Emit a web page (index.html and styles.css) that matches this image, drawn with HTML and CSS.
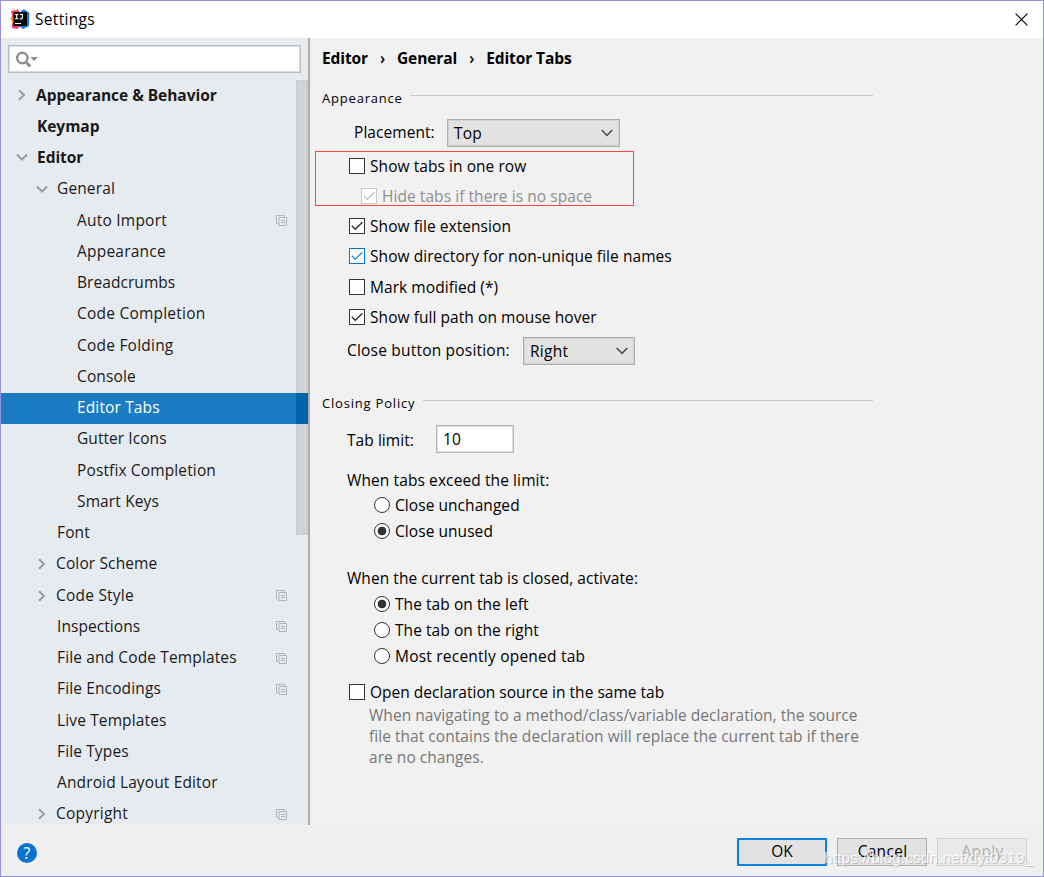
FILE: index.html
```html
<!DOCTYPE html>
<html lang="en">
<head>
<meta charset="utf-8">
<title>Settings</title>
<link rel="stylesheet" href="styles.css">
</head>
<body>
<svg class="defs" width="0" height="0" aria-hidden="true">
  <symbol id="right" viewBox="0 0 12 12"><path d="M3 1.2 8 6 3 10.8" fill="none" stroke="#999da1" stroke-width="2"/></symbol>
  <symbol id="down" viewBox="0 0 12 12"><path d="M1 3.5 6 8.5 11 3.5" fill="none" stroke="#999da1" stroke-width="2"/></symbol>
  <symbol id="copy" viewBox="0 0 11 11"><path d="M2 8.5H.5V.5h8V2M3 2.5h7.5v8H3zM5 5.5h4M5 7.5h4" fill="none" stroke="#adb6bc"/></symbol>
  <symbol id="tick" viewBox="0 0 16 16"><path d="M2 7.8 6 11.8 14.2 3.6" fill="none" stroke="currentColor" stroke-width="1.6"/></symbol>
  <symbol id="combo" viewBox="0 0 12 8"><path d="M.7 1 6 6.3 11.3 1" fill="none" stroke="#505050" stroke-width="1.6"/></symbol>
</svg>
<div class="window">
  <header class="titlebar">
    <svg class="logo" width="20" height="20" viewBox="0 0 20 20">
      <path d="M1 2 8 .5 10 4 6 12 .5 10 2 7z" fill="#f9455f"/>
      <path d="M.5 9 5 8 8 14 3 15z" fill="#fc8a2b"/>
      <path d="M2 14 8 13 11 17 7 20 2 19z" fill="#ef3f70"/>
      <path d="M11 2 14 .3 19.5 4 19 17 13 20 8 16z" fill="#147be8"/>
      <rect x="3.5" y="3" width="13.5" height="14" fill="#080808"/>
      <path d="M5 5.5h3.4M6.7 5.5v4.3M5 9.8h3.4M10 5.5h3M12.4 5.5v3.2q0 1.2-1.2 1.2H9.7M5 14.5h6" fill="none" stroke="#fff" stroke-width="1.1"/>
    </svg>
    <span class="title">Settings</span>
    <svg class="close" width="13" height="13" viewBox="0 0 13 13"><path d="M.6.6 12.4 12.4M12.4.6.6 12.4" stroke="#000" stroke-width="1.2"/></svg>
  </header>
  <div class="body">
    <aside class="sidebar">
      <div class="search">
        <svg width="24" height="18" viewBox="0 0 24 18"><circle cx="7.3" cy="7" r="5.2" fill="none" stroke="#8c8e90" stroke-width="2.4"/><path d="m11 11 4.2 4.5" stroke="#8c8e90" stroke-width="2.8"/><path d="M15 6h8l-4 4z" fill="#8c8e90"/></svg>
      </div>
      <nav class="tree">
        <div class="item top"><svg class="arrow"><use href="#right"/></svg><span class="l1">Appearance &amp; Behavior</span></div>
        <div class="item top"><span class="l1 km">Keymap</span></div>
        <div class="item top"><svg class="arrow"><use href="#down"/></svg><span class="l1 ed">Editor</span></div>
        <div class="item mid"><svg class="arrow"><use href="#down"/></svg><span>General</span></div>
        <div class="item leaf wider"><span>Auto Import</span><svg class="copy"><use href="#copy"/></svg></div>
        <div class="item leaf wider"><span>Appearance</span></div>
        <div class="item leaf tight"><span>Breadcrumbs</span></div>
        <div class="item leaf wider"><span>Code Completion</span></div>
        <div class="item leaf wider"><span>Code Folding</span></div>
        <div class="item leaf"><span>Console</span></div>
        <div class="item leaf selected"><span>Editor Tabs</span></div>
        <div class="item leaf tight"><span>Gutter Icons</span></div>
        <div class="item leaf"><span>Postfix Completion</span></div>
        <div class="item leaf"><span>Smart Keys</span></div>
        <div class="item mid"><span>Font</span></div>
        <div class="item mid closed"><svg class="arrow"><use href="#right"/></svg><span>Color Scheme</span></div>
        <div class="item mid closed wider"><svg class="arrow"><use href="#right"/></svg><span>Code Style</span><svg class="copy"><use href="#copy"/></svg></div>
        <div class="item mid tight"><span>Inspections</span><svg class="copy"><use href="#copy"/></svg></div>
        <div class="item mid"><span>File and Code Templates</span><svg class="copy"><use href="#copy"/></svg></div>
        <div class="item mid"><span>File Encodings</span><svg class="copy"><use href="#copy"/></svg></div>
        <div class="item mid"><span>Live Templates</span></div>
        <div class="item mid"><span>File Types</span></div>
        <div class="item mid"><span>Android Layout Editor</span></div>
        <div class="item mid closed wider"><svg class="arrow"><use href="#right"/></svg><span>Copyright</span><svg class="copy"><use href="#copy"/></svg></div>
      </nav>
      <div class="scrollbar"></div>
    </aside>
    <main class="content">
      <div class="crumbs"><span>Editor</span><i>›</i><span>General</span><i>›</i><span>Editor Tabs</span></div>
      <div class="section appearance"><span>Appearance</span><hr></div>
      <div class="row placement"><span>Placement:</span><div class="combo wide"><span>Top</span><svg><use href="#combo"/></svg></div></div>
      <div class="check first"><b></b><span>Show tabs in one row</span></div>
      <div class="check disabled"><b><svg><use href="#tick"/></svg></b><span>Hide tabs if there is no space</span></div>
      <div class="check"><b><svg><use href="#tick"/></svg></b><span>Show file extension</span></div>
      <div class="check hover"><b><svg><use href="#tick"/></svg></b><span>Show directory for non-unique file names</span></div>
      <div class="check mark"><b></b><span>Mark modified (*)</span></div>
      <div class="check"><b><svg><use href="#tick"/></svg></b><span>Show full path on mouse hover</span></div>
      <div class="row position"><span>Close button position:</span><div class="combo"><span>Right</span><svg><use href="#combo"/></svg></div></div>
      <div class="section closing"><span>Closing Policy</span><hr></div>
      <div class="row limit"><span>Tab limit:</span><div class="field">10</div></div>
      <div class="label exceed">When tabs exceed the limit:</div>
      <div class="radio"><b></b><span>Close unchanged</span></div>
      <div class="radio on"><b></b><span>Close unused</span></div>
      <div class="label activate">When the current tab is closed, activate:</div>
      <div class="radio on left"><b></b><span>The tab on the left</span></div>
      <div class="radio"><b></b><span>The tab on the right</span></div>
      <div class="radio recent"><b></b><span>Most recently opened tab</span></div>
      <div class="check open"><b></b><span>Open declaration source in the same tab</span></div>
      <p class="note">When navigating to a method/class/variable declaration, the source<br>file that contains the declaration will replace the current tab if there<br>are no changes.</p>
      <div class="marker"></div>
    </main>
  </div>
  <footer class="footer">
    <div class="help"><span>?</span></div>
    <div class="buttons"><div class="btn ok">OK</div><div class="btn">Cancel</div><div class="btn off">Apply</div></div>
    <div class="watermark">https://blog.csdn.net/dyt0319_</div>
  </footer>
</div>
</body>
</html>
```
FILE: styles.css
```css
* { box-sizing: border-box; }
body { margin: 0; font: 15.5px/20px "Open Sans", "Noto Sans", sans-serif; letter-spacing: .06px; color: #000; }
.defs { position: absolute; }
svg { display: block; flex: none; }
.window { width: 1044px; height: 877px; display: flex; flex-direction: column; border: 1px solid #9892dc; background: #f1f1f1; position: relative; overflow: hidden; }
.titlebar { height: 37px; flex: none; display: flex; align-items: center; background: #fff; padding: 0 15px 1px 9px; }
.title { margin-left: 5px; letter-spacing: .3px; }
.close { margin-left: auto; }
.body { display: flex; height: 787px; flex: none; }
.sidebar { width: 309px; flex: none; position: relative; overflow: hidden; background: #e6ebef; border-right: 2px solid #adadad; padding-top: 7px; }
.search { width: 293px; height: 28px; margin-left: 7px; background: #fff; border: 1px solid #b9bdc0; box-shadow: inset 0 0 0 1px #dadcde; padding: 5px 6px; }
.tree { padding-top: 7.5px; }
.item { height: 31.25px; padding-bottom: 3px; display: flex; align-items: center; position: relative; color: #1a1a1a; white-space: nowrap; letter-spacing: .13px; }
.item.wider { letter-spacing: .22px; }
.item.tight { letter-spacing: .06px; }
.item.top { padding-left: 15px; font-weight: 700; letter-spacing: -.04px; }
.top > span { margin-left: 8px; }
.top > .km { margin-left: 21px; }
.top > .ed { margin-left: 9px; }
.mid { padding-left: 56px; }
.mid .arrow { margin: 2px 9px 0 -21px; }
.mid.closed { padding-left: 55px; }
.mid.closed .arrow { margin: 2px 8px 0 -20px; }
.leaf { padding-left: 76px; }
.arrow { width: 12px; height: 12px; }
.copy { width: 11px; height: 11px; margin: 2px 21px 0 auto; }
.selected { background: #1a7dc4; color: #fff; }
.scrollbar { position: absolute; left: 295px; top: 42px; width: 12px; height: 455px; background: rgba(0, 0, 0, .1); border: 1px solid rgba(0, 0, 0, .03); }
.selected::after { content: ""; position: absolute; right: 0; top: 0; width: 12px; height: 100%; background: #0070be; }
.content { flex: 1; position: relative; padding: 8px 0 0 12px; white-space: nowrap; }
.crumbs { height: 24px; display: flex; align-items: center; font-weight: 700; letter-spacing: -.1px; }
.crumbs i { font-style: normal; margin: 0 11px 0 12px; width: 6px; font-weight: 600; }
.section { height: 24px; display: flex; align-items: center; font-size: 13px; letter-spacing: .8px; }
.section hr { flex: 1; border: 0; border-top: 1px solid #cbcbcb; margin: 0 170px 5px 8px; }
.appearance { margin-top: 16px; }
.closing { margin-top: 26px; }
.row { display: flex; align-items: center; height: 28px; padding-left: 25px; }
.placement { margin-top: 9px; padding-left: 32px; }
.placement > span { width: 93px; padding-bottom: 2px; }
.position { margin-top: 5px; }
.position > span { width: 176px; padding-bottom: 2px; letter-spacing: .2px; }
.combo { width: 112px; height: 28px; display: flex; align-items: center; justify-content: space-between; border: 1px solid #adadad; background: #e2e2e2; padding: 0 6px; box-shadow: inset 0 0 0 1px #d2d2d2; }
.combo.wide { width: 173px; }
.combo span { letter-spacing: .25px; }
.combo svg { width: 12px; height: 8px; }
.check { height: 30px; display: flex; align-items: center; padding-left: 27px; }
.check b { width: 16px; height: 16px; border: 1px solid #333; background: #fff; margin-right: 5px; color: #333; }
.check b svg { width: 14px; height: 14px; }
.check.first { margin-top: 4px; }
.check.disabled { padding-left: 39px; color: #8f8f8f; }
.disabled b { border-color: #c8c8c8; color: #c3c3c3; }
.hover b { border-color: #0078d7; color: #2c8dd9; }
.check.mark { margin-top: 1px; }
.limit { margin-top: 10px; }
.limit > span { width: 89px; padding-top: 2px; }
.field { width: 78px; height: 28px; border: 1px solid #b6b6b6; box-shadow: inset 0 0 0 1px #dedede; background: #fff; padding: 3px 6px; }
.label { height: 24px; line-height: 24px; padding-left: 25px; }
.exceed { margin-top: 15px; letter-spacing: .1px; }
.activate { margin-top: 22px; }
.radio { height: 26px; display: flex; align-items: center; padding-left: 52px; }
.radio b { width: 16px; height: 16px; border: 1px solid #333; border-radius: 50%; background: #fff; margin-right: 5px; }
.radio.on b { background: radial-gradient(circle, #333 0 4px, #fff 4.7px); }
.radio.left { margin-top: 1px; }
.radio.recent { letter-spacing: .22px; }
.check.open { height: 24px; margin-top: 11px; letter-spacing: .01px; }
.note { margin: 1px 0 0 47px; line-height: 21px; color: #777; letter-spacing: .04px; }
.marker { position: absolute; left: 5px; top: 113px; width: 319px; height: 55px; border: 1px solid #f44; }
.footer { height: 51px; display: flex; align-items: center; justify-content: space-between; background: #efefef; padding: 2px 16px 0 16px; }
.help { width: 20px; height: 20px; margin-top: 2px; border-radius: 50%; background: #0872d1; color: #fff; text-align: center; }
.buttons { display: flex; gap: 10px; }
.btn { width: 90px; height: 28px; line-height: 25px; text-align: center; border: 1px solid #adadad; background: #e2e2e2; }
.btn:not(.ok) { letter-spacing: .3px; padding-left: 1px; }
.ok { border: 2px solid #0b83df; line-height: 23px; }
.off { border-color: #d2d2d2; background: #e9e9e9; color: #b0b0b0; }
.watermark { position: absolute; left: 823px; bottom: 8px; font: 15.5px/20px "Liberation Sans", sans-serif; letter-spacing: .08px; color: rgba(255, 255, 255, .8); text-shadow: 1px 1px 0 rgba(120, 120, 120, .35); }
```
